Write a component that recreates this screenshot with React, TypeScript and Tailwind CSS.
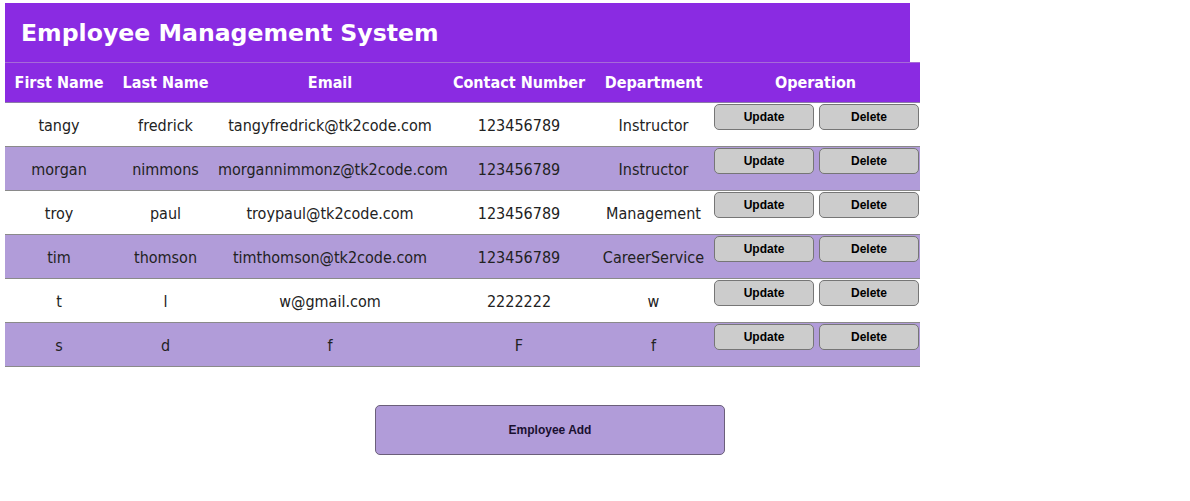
import React from 'react'

type Employee = {
  firstName: string
  lastName: string
  email: string
  contact: string
  department: string
}

const EMPLOYEES: Employee[] = [
  { firstName: 'tangy', lastName: 'fredrick', email: 'tangyfredrick@tk2code.com', contact: '123456789', department: 'Instructor' },
  { firstName: 'morgan', lastName: 'nimmons', email: 'morgannimmonz@tk2code.com', contact: '123456789', department: 'Instructor' },
  { firstName: 'troy', lastName: 'paul', email: 'troypaul@tk2code.com', contact: '123456789', department: 'Management' },
  { firstName: 'tim', lastName: 'thomson', email: 'timthomson@tk2code.com', contact: '123456789', department: 'CareerService' },
  { firstName: 't', lastName: 'l', email: 'w@gmail.com', contact: '2222222', department: 'w' },
  { firstName: 's', lastName: 'd', email: 'f', contact: 'F', department: 'f' },
]

const COLS = [
  { label: 'First Name', w: 'w-[108px]' },
  { label: 'Last Name', w: 'w-[105px]' },
  { label: 'Email', w: 'w-[224px]' },
  { label: 'Contact Number', w: 'w-[154px]' },
  { label: 'Department', w: 'w-[115px]' },
  { label: 'Operation', w: 'w-[209px]' },
]

const bodyFont = "font-['DejaVu_Sans_Condensed','DejaVu_Sans',sans-serif]"
const btnFont = "font-['Liberation_Sans',Arial,sans-serif]"

function OpButton({ children }: { children: React.ReactNode }) {
  return (
    <button className={`${btnFont} w-[100px] h-[26px] pb-[1px] rounded-[5px] bg-[#cccccc] border border-[#767676] text-[12px] font-bold text-black`}>
      {children}
    </button>
  )
}

export default function App() {
  return (
    <div className={`${bodyFont} w-[1190px] h-[501px] bg-white pt-[3px] pl-[5px]`}>
      {/* Header */}
      <div className="w-[905px] h-[59px] bg-[#8a2be2] flex items-center pl-[16px] pt-[2px]">
        <h1 className="font-['DejaVu_Sans',Verdana,sans-serif] text-[23.6px] font-bold text-white">
          Employee Management System
        </h1>
      </div>

      {/* Table */}
      <table className="w-[915px] border-collapse table-fixed">
        <thead>
          <tr className="h-[40px] bg-[#8a2be2] border-t border-t-[#a66ad8] border-b border-b-[#8c7aa8]">
            {COLS.map(c => (
              <th key={c.label} className={`${c.w} p-0 pt-[1px] text-center text-[16px] font-bold text-white`}>
                {c.label}
              </th>
            ))}
          </tr>
        </thead>
        <tbody>
          {EMPLOYEES.map((e, i) => (
            <tr key={i} className={`h-[44px] border-b border-b-[#8a8a8a] ${i % 2 === 1 ? 'bg-[#b19cd9]' : 'bg-white'}`}>
              <td className="p-0 pt-[2px] text-center text-[16px] text-[#222]">{e.firstName}</td>
              <td className="p-0 pt-[2px] text-center text-[16px] text-[#222]">{e.lastName}</td>
              <td className="p-0 pt-[2px] text-center text-[16px] text-[#222]">{e.email}</td>
              <td className="p-0 pt-[2px] text-center text-[16px] text-[#222]">{e.contact}</td>
              <td className="p-0 pt-[2px] text-center text-[16px] text-[#222]">{e.department}</td>
              <td className="p-0 align-top">
                <div className="flex gap-[5px] pt-[1px] pl-[3px]">
                  <OpButton>Update</OpButton>
                  <OpButton>Delete</OpButton>
                </div>
              </td>
            </tr>
          ))}
        </tbody>
      </table>

      {/* Add button */}
      <div className="pt-[38px] pl-[370px]">
        <button className={`${btnFont} w-[350px] h-[50px] rounded-[5px] bg-[#b19cd9] border border-[#6b5f7a] text-[12px] font-bold text-[#1a1030]`}>
          Employee Add
        </button>
      </div>
    </div>
  )
}
